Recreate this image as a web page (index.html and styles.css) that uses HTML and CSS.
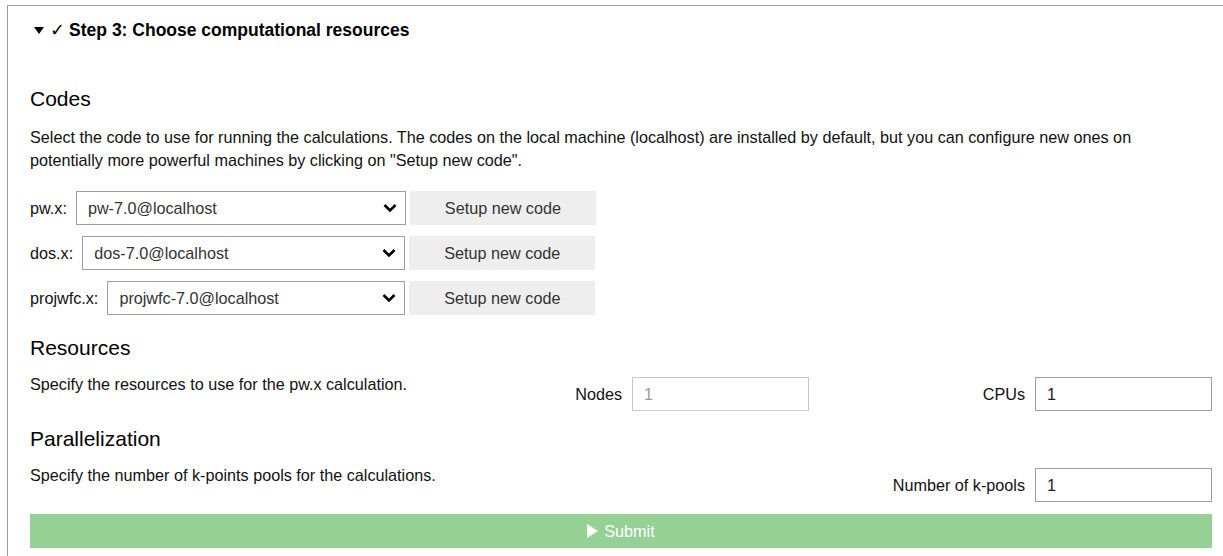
FILE: index.html
```html
<!DOCTYPE html>
<html lang="en">
<head>
<meta charset="utf-8">
<title>Step 3</title>
<link rel="stylesheet" href="styles.css">
</head>
<body>
<section class="panel">
  <div class="summary">
    <svg class="caret" width="10" height="7" viewBox="0 0 10 7"><path d="M0 0 H10 L5 7 Z" fill="#000"/></svg>
    <span class="check">✓</span>
    <span class="title">Step 3: Choose computational resources</span>
  </div>

  <h3 class="heading h-codes">Codes</h3>
  <p class="desc">Select the code to use for running the calculations. The codes on the local machine (localhost) are installed by default, but you can configure new ones on potentially more powerful machines by clicking on "Setup new code".</p>

  <div class="code-rows">
    <div class="code-row">
      <span class="code-label">pw.x:</span>
      <div class="select"><span>pw-7.0@localhost</span><svg width="14" height="10" viewBox="0 0 14 10"><path d="M1.5 2 L7 7.5 L12.5 2" fill="none" stroke="#000" stroke-width="2.6"/></svg></div>
      <button class="setup">Setup new code</button>
    </div>
    <div class="code-row">
      <span class="code-label">dos.x:</span>
      <div class="select"><span>dos-7.0@localhost</span><svg width="14" height="10" viewBox="0 0 14 10"><path d="M1.5 2 L7 7.5 L12.5 2" fill="none" stroke="#000" stroke-width="2.6"/></svg></div>
      <button class="setup">Setup new code</button>
    </div>
    <div class="code-row">
      <span class="code-label">projwfc.x:</span>
      <div class="select"><span>projwfc-7.0@localhost</span><svg width="14" height="10" viewBox="0 0 14 10"><path d="M1.5 2 L7 7.5 L12.5 2" fill="none" stroke="#000" stroke-width="2.6"/></svg></div>
      <button class="setup">Setup new code</button>
    </div>
  </div>

  <h3 class="heading h-res">Resources</h3>
  <div class="res-row">
    <p class="row-text">Specify the resources to use for the pw.x calculation.</p>
    <div class="field">
      <span class="field-label">Nodes</span>
      <div class="num disabled">1</div>
    </div>
    <div class="field">
      <span class="field-label">CPUs</span>
      <div class="num">1</div>
    </div>
  </div>

  <h3 class="heading h-par">Parallelization</h3>
  <div class="par-row">
    <p class="row-text">Specify the number of k-points pools for the calculations.</p>
    <div class="field">
      <span class="field-label">Number of k-pools</span>
      <div class="num">1</div>
    </div>
  </div>

  <button class="submit"><svg width="11" height="14" viewBox="0 0 11 14"><path d="M0 0 L11 7 L0 14 Z" fill="#fff"/></svg><span>Submit</span></button>
</section>
</body>
</html>
```

FILE: styles.css
```css
* { box-sizing: border-box; }
html, body { margin: 0; padding: 0; background: #fff; }
body {
  font-family: "Liberation Sans", Arial, sans-serif;
  font-size: 16.2px;
  color: #111;
  overflow: hidden;
}
.panel {
  margin: 5px 0 0 7px;
  border-top: 1px solid #9e9e9e;
  border-left: 1px solid #9e9e9e;
  padding: 0 11px 20px 22px;
}
.summary {
  display: flex;
  align-items: center;
  padding: 14px 0 0 4px;
  height: 34px;
  line-height: 20px;
  font-weight: bold;
  font-size: 17.5px;
  color: #000;
}
.caret { margin-right: 6px; margin-top: 1px; }
.check { font-family: "DejaVu Sans", sans-serif; font-weight: bold; font-size: 18px; margin-right: 4px; }
.heading {
  margin: 0;
  font-weight: normal;
  font-size: 21px;
  line-height: 26px;
  color: #000;
}
.h-codes { margin-top: 46px; }
.desc {
  margin: 14px 0 0;
  line-height: 23px;
  max-width: 1150px;
}
.code-rows {
  margin-top: 19px;
  display: flex;
  flex-direction: column;
  gap: 11px;
}
.code-row {
  display: flex;
  align-items: center;
  height: 34px;
}
.code-label { margin-right: 9px; }
.select {
  flex: 0 0 auto;
  height: 34px;
  border: 1px solid #9e9e9e;
  display: flex;
  align-items: center;
  justify-content: space-between;
  padding: 0 8px 0 11px;
  color: #333;
}
.code-row:nth-child(1) .select { width: 330px; }
.code-row:nth-child(2) .select { width: 323px; }
.code-row:nth-child(3) .select { width: 298px; }
.setup {
  margin-left: 4px;
  width: 186px;
  height: 34px;
  border: none;
  background: #eeeeee;
  font-family: inherit;
  font-size: 16.2px;
  color: #333;
  padding: 0;
}
.h-res { margin-top: 20px; }
.res-row {
  margin-top: 12px;
  display: grid;
  grid-template-columns: minmax(0, 1fr) minmax(0, 1fr) minmax(0, 1fr);
  column-gap: 27px;
}
.row-text { margin: 0; line-height: 23px; white-space: nowrap; }
.field {
  justify-self: end;
  display: flex;
  align-items: center;
  margin-top: 4px;
}
.field-label { margin-right: 10px; color: #111; }
.num {
  width: 177px;
  height: 34px;
  border: 1px solid #9e9e9e;
  padding: 0 11px;
  display: flex;
  align-items: center;
  color: #222;
}
.num.disabled { border-color: #c8c8c8; color: #9a9a9a; }
.h-par { margin-top: 15px; }
.par-row {
  margin-top: 12px;
  display: flex;
  justify-content: space-between;
  align-items: flex-start;
}
.submit {
  margin-top: 12px;
  width: 100%;
  height: 34px;
  border: none;
  background: #95d195;
  color: #fff;
  font-family: inherit;
  font-size: 16.2px;
  display: flex;
  align-items: center;
  justify-content: center;
  gap: 6px;
  padding: 0;
}
```
